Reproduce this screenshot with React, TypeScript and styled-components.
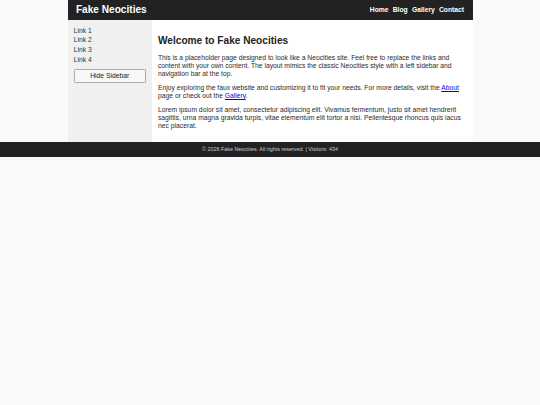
import styled, { createGlobalStyle } from "styled-components";

const GlobalStyle = createGlobalStyle`
  body {
    margin: 0;
    background-color: #fafafa;
    font-family: "Liberation Sans", Arial, sans-serif;
    color: #2b2b2b;
  }
`;

const Container = styled.div`
  width: 405px;
  margin: 0 auto;
`;

const Header = styled.header`
  height: 20.3px;
  padding: 0 8.4px;
  background-color: #222;
  display: flex;
  justify-content: space-between;
  align-items: center;
`;

const SiteTitle = styled.h1`
  margin: 0;
  font-size: 10.125px;
  line-height: 11.64px;
  font-weight: bold;
  color: #fff;
`;

const Nav = styled.nav`
  display: flex;
  gap: 4.2px;
`;

const NavLink = styled.a`
  color: #fff;
  font-size: 6.75px;
  line-height: 7.76px;
  font-weight: bold;
  text-decoration: none;
`;

const Layout = styled.div`
  display: flex;
`;

const Sidebar = styled.aside`
  width: 84.4px;
  flex-shrink: 0;
  box-sizing: border-box;
  padding: 6.33px;
  background-color: #f0f0f0;
`;

const LinkList = styled.ul`
  list-style: none;
  margin: 0;
  padding: 0;
`;

const LinkItem = styled.li`
  margin-bottom: 1.9px;
  font-size: 6.75px;
  line-height: 7.76px;
`;

const SideLink = styled.a`
  color: #333;
  text-decoration: none;
`;

const ToggleButton = styled.button`
  display: block;
  width: 100%;
  margin-top: 5.4px;
  padding: 2.1px 0;
  font-family: inherit;
  font-size: 6.75px;
  line-height: 7.76px;
  color: #222;
  background-color: #f7f7f7;
  border: 1px solid #aaa;
  border-radius: 1.3px;
`;

const Main = styled.main`
  flex: 1;
  padding: 5.3px 8.8px 5.2px 6.1px;
  background-color: #fff;
`;

const Heading = styled.h2`
  margin: 9.9px 0 7px;
  font-size: 10.125px;
  line-height: 11.64px;
  color: #222;
`;

const Paragraph = styled.p`
  margin: 6.75px 0;
  font-size: 6.75px;
  line-height: 7.76px;
`;

const TextLink = styled.a`
  color: #0000ee;
  text-decoration: underline;
`;

const Footer = styled.footer`
  padding: 4.55px 0;
  background-color: #222;
  color: #ccc;
  font-size: 5.4px;
  line-height: 6.2px;
  text-align: center;
`;

const links = ["Link 1", "Link 2", "Link 3", "Link 4"];
const navItems = ["Home", "Blog", "Gallery", "Contact"];

const App = () => {
  return (
    <>
      <GlobalStyle />
      <Container>
        <Header>
          <SiteTitle>Fake Neocities</SiteTitle>
          <Nav>
            {navItems.map((item) => (
              <NavLink key={item} href="#">
                {item}
              </NavLink>
            ))}
          </Nav>
        </Header>
        <Layout>
          <Sidebar>
            <LinkList>
              {links.map((link) => (
                <LinkItem key={link}>
                  <SideLink href="#">{link}</SideLink>
                </LinkItem>
              ))}
            </LinkList>
            <ToggleButton>Hide Sidebar</ToggleButton>
          </Sidebar>
          <Main>
            <Heading>Welcome to Fake Neocities</Heading>
            <Paragraph>
              This is a placeholder page designed to look like a Neocities site. Feel free to
              replace the links and content with your own content. The layout mimics the classic
              Neocities style with a left sidebar and navigation bar at the top.
            </Paragraph>
            <Paragraph>
              Enjoy exploring the faux website and customizing it to fit your needs. For more
              details, visit the <TextLink href="#">About</TextLink> page or check out the{" "}
              <TextLink href="#">Gallery</TextLink>.
            </Paragraph>
            <Paragraph>
              Lorem ipsum dolor sit amet, consectetur adipiscing elit. Vivamus fermentum, justo sit
              amet hendrerit sagittis, urna magna gravida turpis, vitae elementum elit tortor a
              nisi. Pellentesque rhoncus quis lacus nec placerat.
            </Paragraph>
          </Main>
        </Layout>
      </Container>
      <Footer>© 2026 Fake Neocities. All rights reserved. | Visitors: 434</Footer>
    </>
  );
};

export default App;
